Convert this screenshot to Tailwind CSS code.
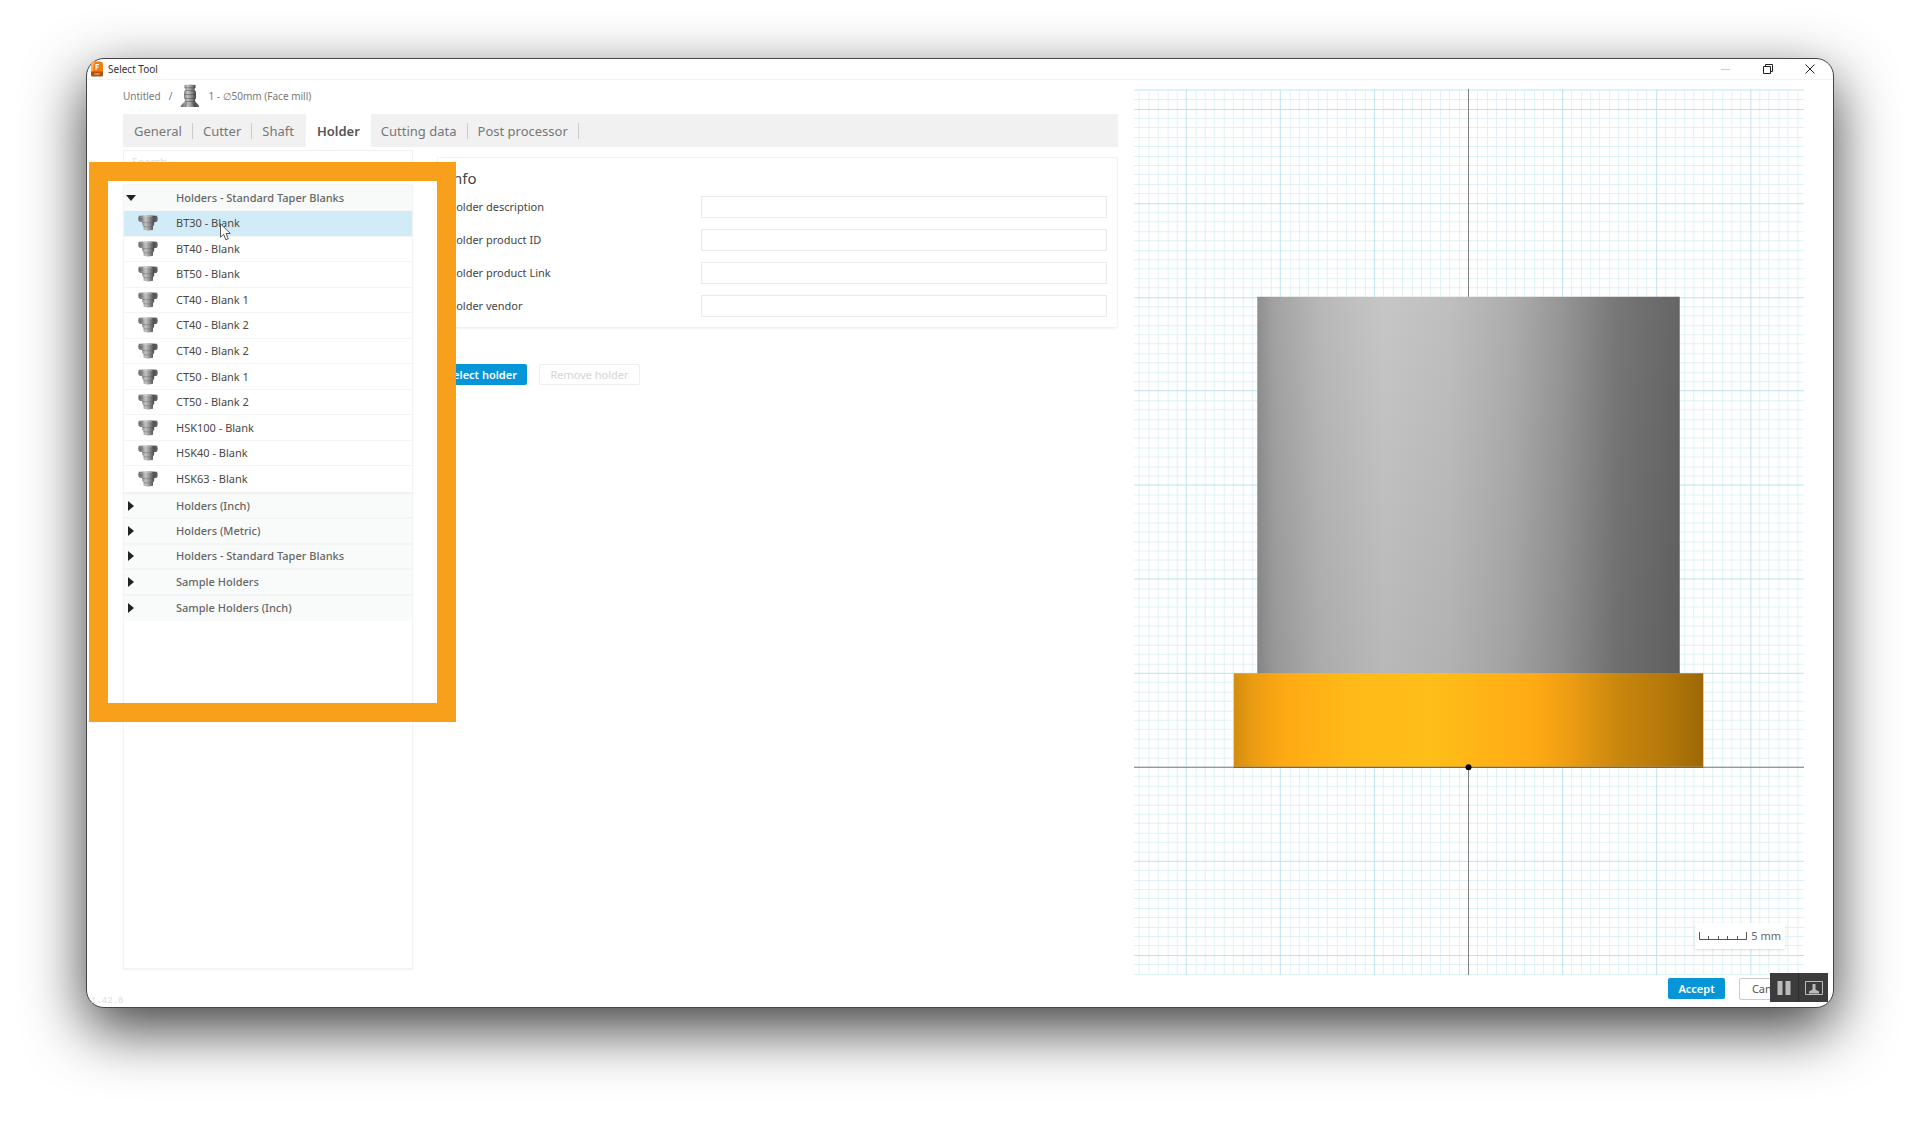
<!DOCTYPE html>
<html lang="en">
<head>
<meta charset="utf-8">
<meta name="viewport" content="width=device-width, initial-scale=1">
<title>Select Tool</title>
<script src="https://cdn.jsdelivr.net/npm/@tailwindcss/browser@4"></script>
</head>
<body class="bg-white font-['Noto_Sans',sans-serif] text-[11px] leading-4 text-[#555]">

<!-- shared artwork -->
<svg class="absolute size-0" aria-hidden="true">
  <defs>
    <linearGradient id="metal" x1="0" x2="1" y1="0" y2="0">
      <stop offset="0" stop-color="#6e6e6e"/><stop offset=".18" stop-color="#8a8a8a"/>
      <stop offset=".38" stop-color="#c4c4c4"/><stop offset=".55" stop-color="#999"/>
      <stop offset=".8" stop-color="#4f4f4f"/><stop offset="1" stop-color="#6a6a6a"/>
    </linearGradient>
    <symbol id="holder" viewBox="0 0 20 16">
      <path fill="url(#metal)" d="M1 .8Q10 -.2 19 .8L19.6 2.2V5.4L18.4 7H16.2V9.4L15 11.6V14.8Q10 16 5.6 14.8V11.6L4.2 9.4V7H2L.4 5.4V2.2Z"/>
      <path fill="none" stroke="#555" stroke-opacity=".55" stroke-width=".7" d="M.6 3.4Q3 4.4 5 4.2M15 3.4 19.4 3.8M4.2 7.4Q10 8.4 16.2 7.2M5.4 11.6Q10 12.4 15 11.6"/>
      <path fill="none" stroke="#fff" stroke-opacity=".4" stroke-width=".6" d="M5 1.8Q9 1 14 1.8"/>
    </symbol>
    <symbol id="mill" viewBox="0 0 20 24">
      <path fill="url(#metal)" d="M4.4 1Q10 0 15.6 1V3.6L14.6 4.4V6.4L16 7.4V14L15.2 15V17.4L19 21.4V23H.8V21.4L4.8 17.4V15L4 14V7.4L5.4 6.4V4.4L4.4 3.6Z"/>
      <path fill="none" stroke="#333" stroke-opacity=".55" stroke-width=".8" d="M4.6 3.8H15.4M5.2 6.6H14.8M4 10.6H16M4.4 14.4H15.6M5 17.4H15M7 18.4 5.4 22.8M13 18.4 14.6 22.8"/>
    </symbol>
  </defs>
</svg>

<div class="flex min-h-screen flex-col px-[86px] pt-[58px] pb-[114px]">
  <main class="relative flex flex-1 flex-col rounded-[18px] border border-[#444] bg-white shadow-[0_21px_60px_rgba(0,0,0,0.76)]">

    <!-- title bar -->
    <header class="flex h-[21px] items-center border-b border-[#eef3f3] pl-1 text-[10px] text-[#333]">
      <svg class="h-4 w-3 shrink-0" viewBox="0 0 12 16" aria-hidden="true">
        <path fill="#f57c0c" d="M3 .5H9Q12 .5 12 4V12H0V4Q0 .5 3 .5Z"/>
        <path fill="#ffab55" d="M3 .5H4.5Q2 4 2 12H0V4Q0 .5 3 .5Z"/>
        <path fill="#b5500c" d="M0 10.5H12V14Q12 15.5 10.5 15.5H1.5Q0 15.5 0 14Z"/>
        <path fill="none" stroke="#fff" stroke-width="1.2" d="M5 9V3.6H8M5 6.2H7.4"/>
        <path stroke="#f6c79c" d="M3.5 13H8.5"/>
      </svg>
      <h1 class="ml-[5px]">Select Tool</h1>
      <div class="ml-auto flex items-center pr-0.5">
        <button aria-label="Minimize" class="flex w-[42px] justify-center"><svg class="size-2.5" viewBox="0 0 10 10"><path stroke="#ccc" d="M0 5.5H9"/></svg></button>
        <button aria-label="Restore" class="flex w-[42px] justify-center"><svg class="size-2.5" viewBox="0 0 10 10" fill="none" stroke="#222"><path d="M.5 2.5H7.5V9.5H.5ZM2.5 2.5V.5H9.5V7.5H7.5"/></svg></button>
        <button aria-label="Close" class="flex w-[42px] justify-center"><svg class="size-2.5" viewBox="0 0 10 10" fill="none" stroke="#222"><path d="M.5.5 9.5 9.5M9.5.5.5 9.5"/></svg></button>
      </div>
    </header>

    <div class="grid flex-1 grid-cols-[995fr_670fr] gap-4 pr-[29px] pl-9">

      <section class="flex min-w-0 flex-col pt-1">
        <nav class="flex h-6 items-center text-[10px] text-[#777]" aria-label="Breadcrumb">
          <a href="#">Untitled</a>
          <span class="mx-2">/</span>
          <svg class="h-6 w-5" aria-hidden="true"><use href="#mill"/></svg>
          <span class="ml-2">1 - ∅50mm (Face mill)</span>
        </nav>

        <nav class="mt-1.5 flex h-[33px] items-center bg-[#f1f1f1] pl-px text-[13px] text-[#777]" aria-label="Tool properties">
          <button class="px-2.5">General</button><span class="h-4 w-px bg-[#ccc]"></span>
          <button class="px-2.5">Cutter</button><span class="h-4 w-px bg-[#ccc]"></span>
          <button class="pr-3 pl-2.5">Shaft</button>
          <button class="h-full bg-white px-[11px] font-semibold text-[#555]">Holder</button>
          <button class="px-2.5">Cutting data</button><span class="h-4 w-px bg-[#ccc]"></span>
          <button class="px-2.5">Post processor</button><span class="h-4 w-px bg-[#ccc]"></span>
        </nav>

        <div class="flex flex-1 gap-6 pt-[3px]">
          <div class="flex w-[290px] shrink-0 flex-col">
            <input aria-label="Search" placeholder="Search" class="h-[22px] border border-[#f0f2f2] px-2 placeholder:text-[#ddd]">

            <div class="mt-3 mb-1.5 flex-1 border border-[#f3f5f5] shadow-xs">
              <button class="flex h-[26px] w-full items-center bg-[#f8fafa] font-medium text-[#666]" aria-expanded="true">
                <svg class="ml-0.5 h-1.5 w-2.5" viewBox="0 0 10 6"><path fill="#222" d="M0 0H10L5 6Z"/></svg>
                <span class="ml-10">Holders - Standard Taper Blanks</span>
              </button>
              <ul id="holders" class="grid h-[281px] auto-rows-fr divide-y divide-[#f3f5f5] text-[#484848]"></ul>
              <ul id="libraries" class="grid h-[129px] auto-rows-fr divide-y-2 divide-[#f3f5f5] border-t-2 border-[#f0f2f2] bg-[#f9fbfb] font-medium text-[#666]"></ul>
            </div>
          </div>

          <div class="min-w-0 flex-1 pt-[7px]">
            <form class="rounded-xs border border-[#f1f1f1] px-2.5 pt-3 pb-2.5 shadow-xs">
              <h2 class="text-[15px] leading-4 text-[#444]">Info</h2>
              <div class="mt-2.5 grid grid-cols-[253fr_406fr] items-center gap-y-[11px] text-[#444]">
                <label for="desc">Holder description</label><input id="desc" class="h-[22px] border border-[#e9eaea] px-2">
                <label for="pid">Holder product ID</label><input id="pid" class="h-[22px] border border-[#e9eaea] px-2">
                <label for="link">Holder product Link</label><input id="link" class="h-[22px] border border-[#e9eaea] px-2">
                <label for="vendor">Holder vendor</label><input id="vendor" class="h-[22px] border border-[#e9eaea] px-2">
              </div>
            </form>
            <div class="mt-9 flex gap-3">
              <button class="h-[21px] w-[90px] rounded-xs bg-[#0696d7] font-semibold text-white">Select holder</button>
              <button disabled class="h-[21px] w-[101px] rounded-xs border border-[#eee] text-[#d4d4d4]">Remove holder</button>
            </div>
          </div>
        </div>
      </section>

      <!-- tool preview -->
      <section class="relative pt-[9px]" aria-label="Tool preview">
        <svg class="h-full w-full" viewBox="0 0 670 885" preserveAspectRatio="xMidYMid slice">
          <defs>
            <linearGradient id="steel" x1="0" x2="1" y1="0" y2="0">
              <stop offset="0" stop-color="#8e8e8e"/><stop offset=".04" stop-color="#a2a2a2"/>
              <stop offset=".15" stop-color="#b8b8b8"/><stop offset=".3" stop-color="#c6c6c6"/>
              <stop offset=".45" stop-color="#bfbfbf"/><stop offset=".6" stop-color="#adadad"/>
              <stop offset=".72" stop-color="#969696"/><stop offset=".85" stop-color="#777"/>
              <stop offset="1" stop-color="#656565"/>
            </linearGradient>
            <linearGradient id="shade" x1="0" x2="0" y1="0" y2="1">
              <stop offset="0" stop-color="#000" stop-opacity="0"/><stop offset="1" stop-color="#000" stop-opacity=".07"/>
            </linearGradient>
            <linearGradient id="amber" x1="0" x2="1" y1="0" y2="0">
              <stop offset="0" stop-color="#d38d10"/><stop offset=".04" stop-color="#eb9c13"/>
              <stop offset=".11" stop-color="#ffaa14"/><stop offset=".25" stop-color="#ffba18"/>
              <stop offset=".42" stop-color="#ffbe19"/><stop offset=".64" stop-color="#ffaa14"/>
              <stop offset=".72" stop-color="#eb9c13"/><stop offset=".82" stop-color="#c9860d"/>
              <stop offset=".92" stop-color="#b4780a"/><stop offset="1" stop-color="#9c6806"/>
            </linearGradient>
          </defs>
          <path id="minor" fill="none" stroke="#dff2f5"/>
          <path id="major" fill="none" stroke="#bfe2f0"/>
          <path fill="none" stroke="#808080" d="M334.5 0V885M0 677.5H670"/>
          <path fill="url(#steel)" d="M123.5 207.5H545.5V584H123.5Z"/>
          <path fill="url(#shade)" d="M123.5 207.5H545.5V584H123.5Z"/>
          <path fill="url(#amber)" d="M100 583.5H569V677H100Z"/>
          <path stroke="#7a5a10" d="M100 677.5H569"/>
          <circle cx="334.5" cy="677.5" r="3"/>
        </svg>
        <div class="absolute right-[19px] bottom-[26px] flex h-[26px] items-center gap-1 bg-white px-1 text-[#666] shadow-sm">
          <svg class="h-2 w-12" viewBox="0 0 48 8" fill="none" stroke="#555"><path d="M.5 0V7.5H47.5V0M9.5 4V7M19.5 4V7M28.5 4V7M38.5 4V7"/></svg>
          <span>5 mm</span>
        </div>
      </section>
    </div>

    <footer class="flex h-8 items-start gap-[14px] pt-[3px] pr-[34px] pl-1">
      <span class="mr-auto self-end font-['Liberation_Mono',monospace] text-[9px] leading-3 text-[#ddd]">1.42.0</span>
      <button class="h-[21px] w-[57px] rounded-xs bg-[#0696d7] font-semibold text-white">Accept</button>
      <button class="h-[22px] w-[60px] rounded-xs border border-[#ccc] text-[#555]">Cancel</button>
    </footer>

    <!-- recorder controls -->
    <div class="absolute right-[5px] bottom-[5px] flex h-[29px] divide-x divide-[#2c2c2c] bg-[#3c3c3c]">
      <button aria-label="Pause" class="flex w-[29px] items-center justify-center"><svg class="h-3.5 w-3.5" viewBox="0 0 14 14" fill="#bbb"><path d="M.5 0H5.5V14H.5ZM8.5 0H13.5V14H8.5Z"/></svg></button>
      <button aria-label="Camera" class="flex w-[29px] items-center justify-center"><svg class="h-3.5 w-[18px]" viewBox="0 0 18 14"><path fill="none" stroke="#bbb" d="M.5.5H17.5V13.5H.5Z"/><path fill="#bbb" d="M7.5 3H10.5V8.5L14 10.5V12.5H4V10.5L7.5 8.5Z"/></svg></button>
    </div>

    <!-- highlight frame and pointer -->
    <div class="pointer-events-none absolute top-[103px] left-0.5 h-[560px] w-[367px] border-[19px] border-[#f8a01c]"></div>
    <svg class="pointer-events-none absolute top-[164px] left-[133px] h-[18px] w-3" viewBox="0 0 12 18" aria-hidden="true">
      <path fill="#fff" stroke="#555" d="M.5.8V14.2L3.6 11.3 5.9 16.8 8.3 15.8 6 10.5H10.3Z"/>
    </svg>
  </main>
</div>

<script>
  const holders = ['BT30 - Blank', 'BT40 - Blank', 'BT50 - Blank', 'CT40 - Blank 1', 'CT40 - Blank 2', 'CT40 - Blank 2',
    'CT50 - Blank 1', 'CT50 - Blank 2', 'HSK100 - Blank', 'HSK40 - Blank', 'HSK63 - Blank'];
  document.getElementById('holders').innerHTML = holders.map((name, i) => `
    <li class="${i ? '' : 'bg-[#d2ecf7]'}"><button class="flex h-full w-full items-center pl-3.5">
      <svg class="h-4 w-5" aria-hidden="true"><use href="#holder"/></svg><span class="ml-[18px]">${name}</span></button></li>`).join('');

  const libraries = ['Holders (Inch)', 'Holders (Metric)', 'Holders - Standard Taper Blanks', 'Sample Holders', 'Sample Holders (Inch)'];
  document.getElementById('libraries').innerHTML = libraries.map(name => `
    <li><button class="flex h-full w-full items-center pl-1" aria-expanded="false">
      <svg class="h-2.5 w-1.5" viewBox="0 0 6 10"><path fill="#222" d="M0 0L6 5L0 10Z"/></svg><span class="ml-[42px]">${name}</span></button></li>`).join('');

  // 1 mm grid around the tool tip, with a stronger line every 10 mm
  const step = 9.39, cx = 334, cy = 677;
  let minor = 'M0 .5H670M0 884.5H670', major = '';
  for (let n = -80; n <= 80; n++) {
    const x = Math.round(cx + n * step) + 0.5, y = Math.round(cy + n * step) + 0.5;
    let d = '';
    if (x > 0 && x < 670) d += `M${x} 0V885`;
    if (y > 0 && y < 885) d += `M0 ${y}H670`;
    if (n % 10) minor += d; else major += d;
  }
  document.getElementById('minor').setAttribute('d', minor);
  document.getElementById('major').setAttribute('d', major);
</script>
</body>
</html>
